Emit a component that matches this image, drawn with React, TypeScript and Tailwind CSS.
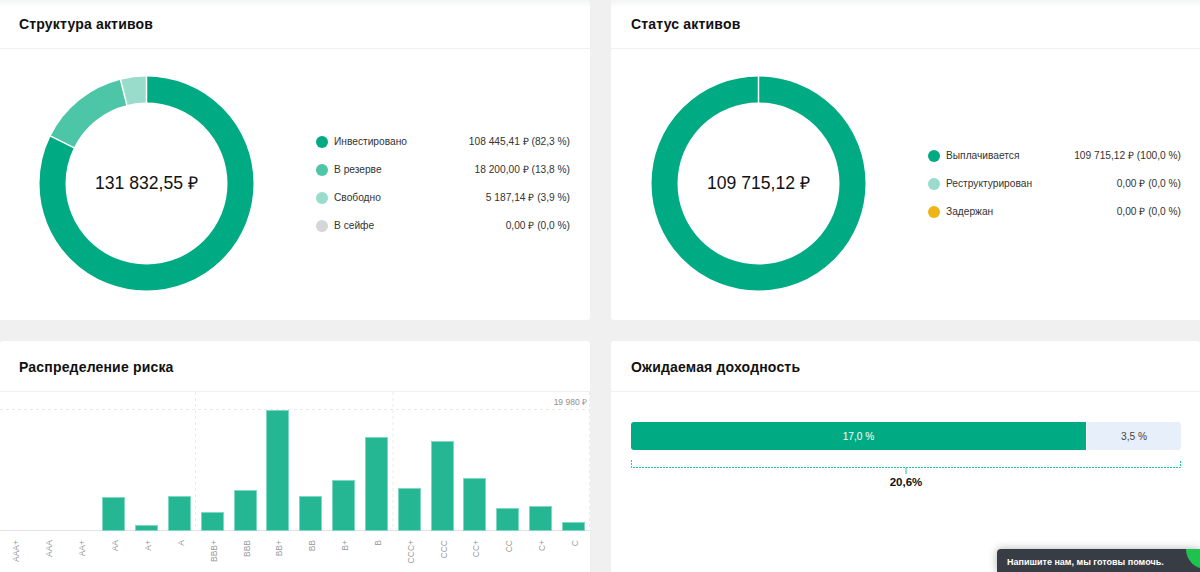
type Slice = { value: number; color: string };

type LegendRow = { label: string; value: string; color: string };

type Bar = { label: string; x: number; top: number };

const BASELINE = 530;
const CHART_TOP = 392;

const STRUCTURE_SLICES: Slice[] = [
  { value: 82.3, color: "#00ab84" },
  { value: 13.8, color: "#4dc6a8" },
  { value: 3.9, color: "#99dccb" },
];

const STRUCTURE_LEGEND: LegendRow[] = [
  { label: "Инвестировано", value: "108 445,41 ₽ (82,3 %)", color: "#00ab84" },
  { label: "В резерве", value: "18 200,00 ₽ (13,8 %)", color: "#4dc6a8" },
  { label: "Свободно", value: "5 187,14 ₽ (3,9 %)", color: "#99dccb" },
  { label: "В сейфе", value: "0,00 ₽ (0,0 %)", color: "#d6d6d6" },
];

const STATUS_LEGEND: LegendRow[] = [
  { label: "Выплачивается", value: "109 715,12 ₽ (100,0 %)", color: "#00ab84" },
  { label: "Реструктурирован", value: "0,00 ₽ (0,0 %)", color: "#99dccb" },
  { label: "Задержан", value: "0,00 ₽ (0,0 %)", color: "#eeb515" },
];

const BARS: Bar[] = [
  { label: "AAA+", x: 3, top: BASELINE },
  { label: "AAA", x: 36, top: BASELINE },
  { label: "AA+", x: 69, top: BASELINE },
  { label: "AA", x: 102, top: 497 },
  { label: "A+", x: 135, top: 525 },
  { label: "A", x: 168, top: 496 },
  { label: "BBB+", x: 201, top: 512 },
  { label: "BBB", x: 234, top: 490 },
  { label: "BB+", x: 266, top: 410 },
  { label: "BB", x: 299, top: 496 },
  { label: "B+", x: 332, top: 480 },
  { label: "B", x: 365, top: 437 },
  { label: "CCC+", x: 398, top: 488 },
  { label: "CCC", x: 431, top: 441 },
  { label: "CC+", x: 463, top: 478 },
  { label: "CC", x: 496, top: 508 },
  { label: "C+", x: 529, top: 506 },
  { label: "C", x: 562, top: 522 },
];

function polar(percent: number, radius: number) {
  const angle = (percent / 100) * 2 * Math.PI;
  return {
    x: 107.5 + radius * Math.sin(angle),
    y: 107.5 - radius * Math.cos(angle),
  };
}

function Donut({ slices, total }: { slices: Slice[]; total: string }) {
  let offset = 0;

  return (
    <div className="relative h-[215px] w-[215px] shrink-0">
      <svg width="215" height="215" viewBox="0 0 215 215">
        {slices.map((slice) => {
          const dashOffset = -offset;
          offset += slice.value;
          return (
            <circle
              key={slice.color}
              cx="107.5"
              cy="107.5"
              r="94"
              fill="none"
              stroke={slice.color}
              strokeWidth="26"
              pathLength={100}
              strokeDasharray={`${slice.value} ${100 - slice.value}`}
              strokeDashoffset={dashOffset}
              transform="rotate(-90 107.5 107.5)"
            />
          );
        })}
        {slices.reduce<number[]>(
          (acc, slice) => [...acc, (acc[acc.length - 1] ?? 0) + slice.value],
          [0],
        ).slice(0, -1).map((start) => {
          const from = polar(start, 80);
          const to = polar(start, 108);
          return (
            <line
              key={start}
              x1={from.x}
              y1={from.y}
              x2={to.x}
              y2={to.y}
              stroke="#ffffff"
              strokeWidth="1.5"
            />
          );
        })}
      </svg>
      <div className="absolute inset-0 flex items-center justify-center text-[17.6px] text-[#111]">
        {total}
      </div>
    </div>
  );
}

function Legend({ rows }: { rows: LegendRow[] }) {
  return (
    <div className="flex flex-col">
      {rows.map((row) => (
        <div key={row.label} className="flex h-7 items-center text-[10.2px] text-[#333]">
          <span
            className="mr-[6px] h-3 w-3 rounded-full"
            style={{ backgroundColor: row.color }}
          />
          <span>{row.label}</span>
          <span className="ml-auto">{row.value}</span>
        </div>
      ))}
    </div>
  );
}

function CardTitle({ title, className }: { title: string; className: string }) {
  return (
    <div className={`flex items-center border-b border-[#edf0f4] ${className}`}>
      <h2 className="text-[14px] font-bold tracking-[0.18px] text-[#111]">{title}</h2>
    </div>
  );
}

function RiskChart() {
  return (
    <svg width="590" height="181" viewBox={`0 ${CHART_TOP} 590 181`} className="block">
      <line x1="0" y1="409.5" x2="590" y2="409.5" stroke="#ebebeb" strokeDasharray="3 3" />
      <line x1="195.5" y1="392" x2="195.5" y2="530" stroke="#ebebeb" strokeDasharray="3 3" />
      <line x1="393" y1="392" x2="393" y2="530" stroke="#ebebeb" strokeDasharray="3 3" />
      <line x1="589.5" y1="392" x2="589.5" y2="530" stroke="#ebebeb" strokeDasharray="3 3" />
      <line x1="0" y1="530.5" x2="590" y2="530.5" stroke="#e3e3e3" />
      <text x="587" y="405" textAnchor="end" fontSize="8.5" fill="#8f8f8f">
        19 980 ₽
      </text>
      {BARS.map((bar) => (
        <g key={bar.label}>
          {bar.top < BASELINE ? (
            <rect
              x={bar.x + 0.5}
              y={bar.top + 0.5}
              width="22"
              height={BASELINE - bar.top}
              fill="#25b794"
              stroke="#7fd8c2"
              strokeWidth="1"
            />
          ) : null}
          <text
            transform={`translate(${bar.x + 16} 540) rotate(-90)`}
            textAnchor="end"
            fontSize="8.5"
            fill="#999999"
          >
            {bar.label}
          </text>
        </g>
      ))}
    </svg>
  );
}

function Bracket() {
  return (
    <svg width="550" height="14" viewBox="0 0 550 14" className="mt-[10px] block">
      <path
        d="M0.5 0V7.5H549.5V0"
        fill="none"
        stroke="#1fc9a0"
        strokeDasharray="2 1"
      />
      <line x1="275" y1="8" x2="275" y2="14" stroke="#1fc9a0" />
    </svg>
  );
}

function YieldChart() {
  return (
    <div className="pl-5 pr-[19px] pt-[30px]">
      <div className="flex h-7 overflow-hidden rounded-[3px] text-[10.2px]">
        <div className="flex w-[455px] items-center justify-center bg-[#00ab84] pt-px text-white">
          17,0 %
        </div>
        <div className="flex flex-1 items-center justify-center border-l border-white bg-[#e7effa] pt-px text-[#444]">
          3,5 %
        </div>
      </div>
      <Bracket />
      <div className="text-center text-[11.5px] font-bold text-[#111]">20,6%</div>
    </div>
  );
}

export default function App() {
  return (
    <div className="relative h-[572px] w-[1200px] overflow-hidden bg-[#f0f0f0] [font-family:'Liberation_Sans',Arial,sans-serif]">
      <div className="grid grid-cols-[590px_589px] grid-rows-[320px_320px] gap-[21px]">
        <section className="rounded-r-[3px] bg-gradient-to-b from-[#f4f5f5] via-white via-[8px] to-white">
          <CardTitle title="Структура активов" className="h-[49px] px-[19px]" />
          <div className="flex items-center pb-[3px] pl-[39px] pt-[1px]">
            <div className="my-[26px]">
              <Donut slices={STRUCTURE_SLICES} total="131 832,55 ₽" />
            </div>
            <div className="ml-[62px] w-[254px]">
              <Legend rows={STRUCTURE_LEGEND} />
            </div>
          </div>
        </section>

        <section className="rounded-l-[3px] bg-gradient-to-b from-[#f4f5f5] via-white via-[8px] to-white">
          <CardTitle title="Статус активов" className="h-[49px] px-5" />
          <div className="flex items-center pb-[3px] pl-10 pt-[1px]">
            <div className="my-[26px]">
              <Donut slices={[{ value: 100, color: "#00ab84" }]} total="109 715,12 ₽" />
            </div>
            <div className="ml-[62px] w-[253px]">
              <Legend rows={STATUS_LEGEND} />
            </div>
          </div>
        </section>

        <section className="rounded-t-[3px] bg-white">
          <CardTitle title="Распределение риска" className="h-[51px] px-[19px] pt-[2px]" />
          <RiskChart />
        </section>

        <section className="rounded-t-[3px] bg-white">
          <CardTitle title="Ожидаемая доходность" className="h-[51px] px-5 pt-[2px]" />
          <YieldChart />
        </section>
      </div>

      <div className="absolute bottom-0 right-0 flex h-[23px] w-[203px] items-center overflow-hidden rounded-tl-[4px] bg-[#383c44] pl-[10px] pt-[4px] text-[9px] font-bold text-white shadow-[0_0_8px_rgba(0,0,0,0.3)]">
        Напишите нам, мы готовы помочь.
        <span className="absolute right-[-14px] top-0 h-[20px] w-[28px] rounded-bl-[20px] bg-[#1fc14f]" />
      </div>
    </div>
  );
}
